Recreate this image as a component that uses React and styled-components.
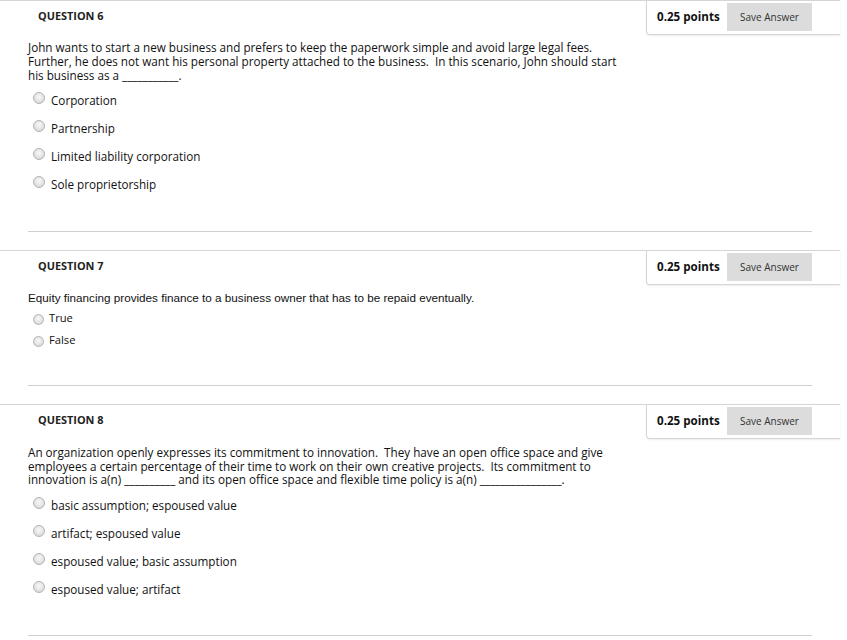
import React from "react"
import styled, { createGlobalStyle } from "styled-components"

const GlobalStyle = createGlobalStyle`
  html, body {
    margin: 0;
    padding: 0;
    background: #fff;
  }
  body {
    font-family: "Open Sans", "Liberation Sans", sans-serif;
    color: #111;
  }
`

const questions = [
  {
    number: 6,
    prompt: [
      "John wants to start a new business and prefers to keep the paperwork simple and avoid large legal fees.",
      "Further, he does not want his personal property attached to the business.\u00a0 In this scenario, John should start",
      "his business as a ___________.",
    ],
    options: ["Corporation", "Partnership", "Limited liability corporation", "Sole proprietorship"],
    variant: "rich",
    tail: 33,
  },
  {
    number: 7,
    prompt: ["Equity financing provides finance to a business owner that has to be repaid eventually."],
    options: ["True", "False"],
    variant: "plain",
    tail: 35,
  },
  {
    number: 8,
    prompt: [
      "An organization openly expresses its commitment to innovation.\u00a0 They have an open office space and give",
      "employees a certain percentage of their time to work on their own creative projects.\u00a0 Its commitment to",
      "innovation is a(n) __________ and its open office space and flexible time policy is a(n) ________________.",
    ],
    options: [
      "basic assumption; espoused value",
      "artifact; espoused value",
      "espoused value; basic assumption",
      "espoused value; artifact",
    ],
    variant: "rich",
    tight: true,
    tail: 32,
  },
]

const App = () => (
  <Page>
    <GlobalStyle />
    {questions.map((q) => (
      <Question key={q.number}>
        <Header>
          <Title>QUESTION {q.number}</Title>
          <PointsBox>
            <Points>0.25 points</Points>
            <SaveButton type="button">Save Answer</SaveButton>
          </PointsBox>
        </Header>
        <Body>
          <Prompt $variant={q.variant} $tight={q.tight}>
            {q.prompt.map((line, i) => (
              <Line key={i}>{line}</Line>
            ))}
          </Prompt>
          <Options $variant={q.variant}>
            {q.options.map((opt) => (
              <Option key={opt} $variant={q.variant}>
                <Radio $variant={q.variant} />
                <OptionLabel $variant={q.variant}>{opt}</OptionLabel>
              </Option>
            ))}
          </Options>
        </Body>
        <Divider $gap={q.tail} />
      </Question>
    ))}
  </Page>
)

export default App

const Page = styled.div`
  width: 840px;
  display: flex;
  flex-direction: column;
  gap: 18px;
`

const Question = styled.section`
  border-top: 1px solid #d6d6d6;
`

const Header = styled.div`
  display: flex;
  justify-content: space-between;
  align-items: flex-start;
  height: 35px;
`

const Title = styled.h2`
  margin: 0;
  padding: 7px 0 0 38px;
  font-size: 10.9px;
  line-height: 16px;
  font-weight: 700;
  color: #222;
`

const PointsBox = styled.div`
  width: 194px;
  height: 34px;
  box-sizing: border-box;
  display: flex;
  align-items: center;
  justify-content: space-between;
  padding: 0 28px 2px 10px;
  border-left: 1px solid #d6d6d6;
  border-bottom: 1px solid #d6d6d6;
  border-bottom-left-radius: 4px;
  box-shadow: 0 1px 2px rgba(0, 0, 0, 0.08);
`

const Points = styled.span`
  font-size: 11.6px;
  font-weight: 700;
  color: #111;
`

const SaveButton = styled.button`
  width: 85px;
  height: 28px;
  border: none;
  background: #dcdcdc;
  font-family: "Open Sans", sans-serif;
  font-size: 10px;
  color: #333;
  padding: 0;
`

const Body = styled.div`
  padding-left: 28px;
`

const Prompt = styled.div`
  margin-top: ${(p) => (p.$variant === "plain" ? "5px" : p.$tight ? "6px" : "4px")};
  font-family: ${(p) =>
    p.$variant === "plain" ? `"Liberation Sans", Arial, sans-serif` : `"Open Sans", sans-serif`};
  font-size: 11.7px;
  line-height: ${(p) => (p.$tight ? "13.5px" : "14px")};
  color: #111;
  white-space: nowrap;
`

const Line = styled.div``

const Options = styled.div`
  margin-top: ${(p) => (p.$variant === "plain" ? "1px" : "4px")};
  display: flex;
  flex-direction: column;
`

const Option = styled.label`
  display: flex;
  align-items: center;
  height: ${(p) => (p.$variant === "plain" ? "22px" : "28px")};
  padding-left: 5px;
`

const Radio = styled.span`
  flex: none;
  width: ${(p) => (p.$variant === "plain" ? "9px" : "10px")};
  height: ${(p) => (p.$variant === "plain" ? "9px" : "10px")};
  border-radius: 50%;
  border: 1px solid #b4b4b4;
  background: radial-gradient(circle at 50% 40%, #f8f8f8 0%, #e4e4e4 55%, #cdcdcd 100%);
  transform: translateY(${(p) => (p.$variant === "plain" ? "2px" : "-2px")});
  margin-right: ${(p) => (p.$variant === "plain" ? "5px" : "6px")};
`

const OptionLabel = styled.span`
  font-size: ${(p) => (p.$variant === "plain" ? "11.2px" : "11.7px")};
  color: #111;
`

const Divider = styled.hr`
  margin: ${(p) => p.$gap}px 28px 0 28px;
  border: none;
  border-top: 1px solid #d0d0d0;
  height: 0;
`
